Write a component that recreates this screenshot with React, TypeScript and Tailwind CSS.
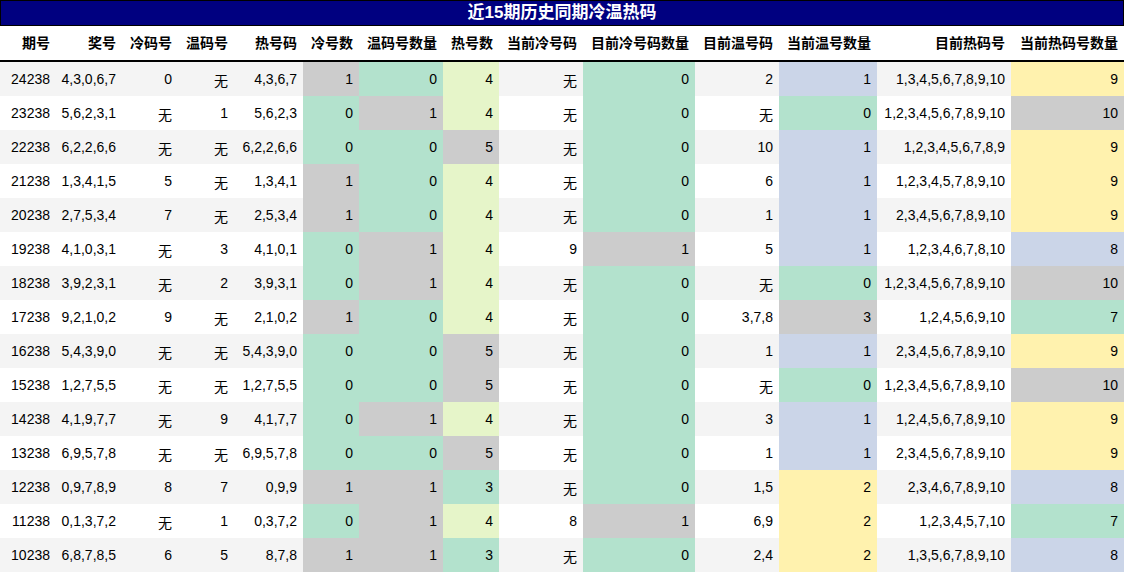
const G = "bg-[#cccccc]";
const GR = "bg-[#b3e2cd]";
const YG = "bg-[#e6f5c9]";
const BL = "bg-[#cbd5e8]";
const YE = "bg-[#fff2ae]";

const widths = [56, 66, 56, 56, 69, 56, 84, 56, 84, 112, 84, 98, 134, 113];
const headers = ["期号", "奖号", "冷码号", "温码号", "热号码", "冷号数", "温码号数量", "热号数", "当前冷号码", "目前冷号码数量", "目前温号码", "当前温号数量", "目前热码号", "当前热码号数量"];

const rows: string[][] = [
  ["24238", "4,3,0,6,7", "0", "无", "4,3,6,7", "1", "0", "4", "无", "0", "2", "1", "1,3,4,5,6,7,8,9,10", "9"],
  ["23238", "5,6,2,3,1", "无", "1", "5,6,2,3", "0", "1", "4", "无", "0", "无", "0", "1,2,3,4,5,6,7,8,9,10", "10"],
  ["22238", "6,2,2,6,6", "无", "无", "6,2,2,6,6", "0", "0", "5", "无", "0", "10", "1", "1,2,3,4,5,6,7,8,9", "9"],
  ["21238", "1,3,4,1,5", "5", "无", "1,3,4,1", "1", "0", "4", "无", "0", "6", "1", "1,2,3,4,5,7,8,9,10", "9"],
  ["20238", "2,7,5,3,4", "7", "无", "2,5,3,4", "1", "0", "4", "无", "0", "1", "1", "2,3,4,5,6,7,8,9,10", "9"],
  ["19238", "4,1,0,3,1", "无", "3", "4,1,0,1", "0", "1", "4", "9", "1", "5", "1", "1,2,3,4,6,7,8,10", "8"],
  ["18238", "3,9,2,3,1", "无", "2", "3,9,3,1", "0", "1", "4", "无", "0", "无", "0", "1,2,3,4,5,6,7,8,9,10", "10"],
  ["17238", "9,2,1,0,2", "9", "无", "2,1,0,2", "1", "0", "4", "无", "0", "3,7,8", "3", "1,2,4,5,6,9,10", "7"],
  ["16238", "5,4,3,9,0", "无", "无", "5,4,3,9,0", "0", "0", "5", "无", "0", "1", "1", "2,3,4,5,6,7,8,9,10", "9"],
  ["15238", "1,2,7,5,5", "无", "无", "1,2,7,5,5", "0", "0", "5", "无", "0", "无", "0", "1,2,3,4,5,6,7,8,9,10", "10"],
  ["14238", "4,1,9,7,7", "无", "9", "4,1,7,7", "0", "1", "4", "无", "0", "3", "1", "1,2,4,5,6,7,8,9,10", "9"],
  ["13238", "6,9,5,7,8", "无", "无", "6,9,5,7,8", "0", "0", "5", "无", "0", "1", "1", "2,3,4,5,6,7,8,9,10", "9"],
  ["12238", "0,9,7,8,9", "8", "7", "0,9,9", "1", "1", "3", "无", "0", "1,5", "2", "2,3,4,6,7,8,9,10", "8"],
  ["11238", "0,1,3,7,2", "无", "1", "0,3,7,2", "0", "1", "4", "8", "1", "6,9", "2", "1,2,3,4,5,7,10", "7"],
  ["10238", "6,8,7,8,5", "6", "5", "8,7,8", "1", "1", "3", "无", "0", "2,4", "2", "1,3,5,6,7,8,9,10", "8"],
];

const colorMaps: Record<number, Record<string, string>> = {
  5: { "1": G, "0": GR },
  6: { "0": GR, "1": G },
  7: { "4": YG, "5": G, "3": GR },
  9: { "0": GR, "1": G },
  11: { "1": BL, "0": GR, "3": G, "2": YE },
  13: { "9": YE, "10": G, "8": BL, "7": GR },
};

export default function App() {
  return (
    <div className="w-[1124px] h-[573px] bg-white text-black overflow-hidden" style={{ fontFamily: '"Liberation Sans", "Noto Sans CJK SC", sans-serif' }}>
      <div className="h-[26px] bg-[#000080] border border-black flex items-center justify-center text-white font-bold text-[17px]">
        近15期历史同期冷温热码
      </div>
      <div className="flex h-[36px] border-b-2 border-black">
        {headers.map((h, i) => (
          <div key={i} style={{ width: widths[i] }} className="flex items-center justify-end pr-[6px] font-bold text-[14px] whitespace-nowrap">
            {h}
          </div>
        ))}
      </div>
      {rows.map((r, ri) => (
        <div key={ri} className={`flex h-[34px] ${ri % 2 === 0 ? "bg-[#f4f4f4]" : "bg-white"}`}>
          {r.map((c, ci) => (
            <div
              key={ci}
              style={{ width: widths[ci] }}
              className={`flex items-center justify-end pr-[6px] text-[14px] whitespace-nowrap ${colorMaps[ci]?.[c] ?? ""} ${c === "无" ? "pt-[5px]" : ""}`}
            >
              {c}
            </div>
          ))}
        </div>
      ))}
    </div>
  );
}
